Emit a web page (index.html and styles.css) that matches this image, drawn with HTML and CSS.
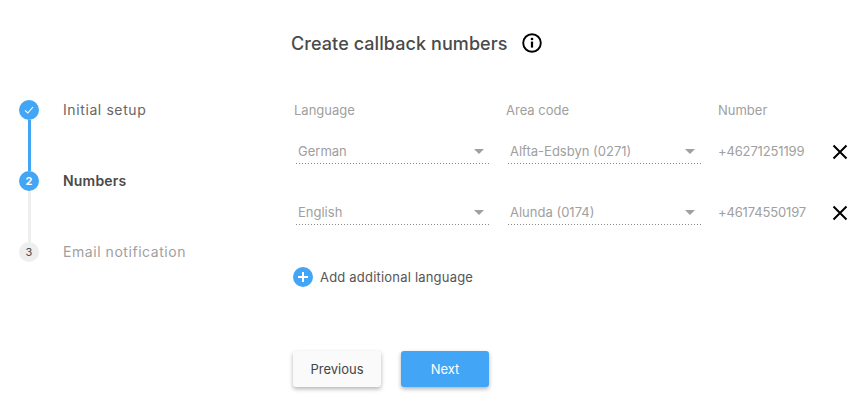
FILE: index.html
```html
<!DOCTYPE html>
<html lang="en">
<head>
    <meta charset="UTF-8">
    <title>Create callback numbers</title>
    <link rel="stylesheet" href="styles.css">
</head>
<body>
    <div class="page">
        <div class="steps">
            <div class="step done">
                <span class="dot">
                    <svg width="10" height="10" viewBox="0 0 10 10"><path d="M1 5.4 3.8 8 9 2" fill="none" stroke="#fff" stroke-width="1.1"/></svg>
                </span>
                <span class="step-name">Initial setup</span>
            </div>
            <div class="step current">
                <span class="dot">2</span>
                <span class="step-name">Numbers</span>
            </div>
            <div class="step">
                <span class="dot">3</span>
                <span class="step-name">Email notification</span>
            </div>
        </div>

        <div class="main">
            <div class="title-row">
                <h1>Create callback numbers</h1>
                <svg class="info" width="20" height="20" viewBox="0 0 20 20">
                    <circle cx="10" cy="10" r="8.8" fill="none" stroke="#000" stroke-width="1.9"/>
                    <circle cx="10" cy="6" r="1.3" fill="#000"/>
                    <rect x="8.9" y="8.6" width="2.2" height="6" fill="#000"/>
                </svg>
            </div>

            <div class="numbers">
                <div class="col-label">Language</div>
                <div class="col-label">Area code</div>
                <div class="col-label last">Number</div>
                <div></div>

                <div class="select"><span>German</span><i class="arrow"></i></div>
                <div class="select"><span>Alfta-Edsbyn (0271)</span><i class="arrow"></i></div>
                <div class="number">+46271251199</div>
                <svg class="remove" width="16" height="16" viewBox="0 0 16 16"><path d="M1.5 1.5 14.5 14.5M14.5 1.5 1.5 14.5" stroke="#000" stroke-width="2"/></svg>

                <div class="select"><span>English</span><i class="arrow"></i></div>
                <div class="select"><span>Alunda (0174)</span><i class="arrow"></i></div>
                <div class="number">+46174550197</div>
                <svg class="remove" width="16" height="16" viewBox="0 0 16 16"><path d="M1.5 1.5 14.5 14.5M14.5 1.5 1.5 14.5" stroke="#000" stroke-width="2"/></svg>
            </div>

            <div class="add-row">
                <svg width="20" height="20" viewBox="0 0 20 20">
                    <circle cx="10" cy="10" r="10" fill="#42a5f5"/>
                    <path d="M10 5v10M5 10h10" stroke="#fff" stroke-width="2"/>
                </svg>
                <span>Add additional language</span>
            </div>

            <div class="buttons">
                <button class="btn">Previous</button>
                <button class="btn primary">Next</button>
            </div>
        </div>
    </div>
</body>
</html>
```

FILE: styles.css
```css
body {
    margin: 0;
    background: #fff;
    font-family: "Inter", "Liberation Sans", sans-serif;
    color: #4a4a4a;
}

.page {
    display: flex;
    height: 405px;
    overflow: hidden;
}

.steps {
    flex: none;
    width: 274px;
    padding: 100px 0 0 19px;
}
.step {
    position: relative;
    display: flex;
    align-items: flex-start;
    gap: 24px;
    height: 71px;
}
.step:not(:last-child)::after {
    content: "";
    position: absolute;
    left: 9px;
    top: 20px;
    bottom: 0;
    width: 3px;
    background: #eeeeee;
}
.step.done::after {
    background: #42a5f5;
}
.dot {
    width: 20px;
    height: 20px;
    border-radius: 50%;
    background: #eeeeee;
    color: #4a4a4a;
    font-size: 11px;
    display: flex;
    align-items: center;
    justify-content: center;
}
.done .dot,
.current .dot {
    background: #42a5f5;
    color: #fff;
    font-weight: 700;
}
.step-name {
    font-size: 14px;
    line-height: 20px;
    letter-spacing: 0.55px;
    color: #a0a0a0;
}
.done .step-name {
    color: #666;
    letter-spacing: 0.6px;
}
.current .step-name {
    color: #4a4a4a;
    font-weight: 600;
    letter-spacing: 0.2px;
}

.main {
    flex: 1;
}
.title-row {
    display: flex;
    align-items: center;
    gap: 14px;
    height: 20px;
    margin: 33px 0 0 -2px;
}
h1 {
    margin: 0;
    font-size: 18px;
    font-weight: 500;
    letter-spacing: 0.08px;
    color: #4a4a4a;
}

.numbers {
    display: grid;
    grid-template-columns: 197px 196px 101px 16px;
    grid-template-rows: 21px 61px 61px;
    column-gap: 15px;
    align-items: center;
    margin-top: 47px;
}
.col-label {
    font-size: 13px;
    line-height: 20px;
    color: #a0a0a0;
    padding-left: 1px;
    align-self: start;
}
.col-label.last {
    padding-left: 2px;
}
.select {
    display: flex;
    align-items: center;
    justify-content: space-between;
    height: 24px;
    margin-left: 3px;
    padding: 0 6px 1px 2px;
    background: linear-gradient(to right, #888 1px, transparent 1px) left bottom / 3px 1px repeat-x;
    font-size: 13px;
    color: #a0a0a0;
}
.arrow {
    width: 0;
    height: 0;
    border-left: 5px solid transparent;
    border-right: 5px solid transparent;
    border-top: 5px solid #a0a0a0;
}
.number {
    font-size: 13px;
    letter-spacing: -0.15px;
    color: #a0a0a0;
    padding: 0 0 1px 2px;
}

.add-row {
    display: flex;
    align-items: center;
    gap: 7px;
    margin-top: 24px;
    font-size: 13px;
    letter-spacing: 0.2px;
    color: #555;
}

.buttons {
    display: flex;
    gap: 20px;
    margin-top: 64px;
}
.btn {
    width: 88px;
    height: 36px;
    border: none;
    border-radius: 3px;
    background: #fafafa;
    box-shadow: 0 2px 4px rgba(0, 0, 0, 0.3);
    font-family: inherit;
    font-size: 13px;
    color: #444;
}
.btn.primary {
    background: #42a5f5;
    color: #fff;
}
```
